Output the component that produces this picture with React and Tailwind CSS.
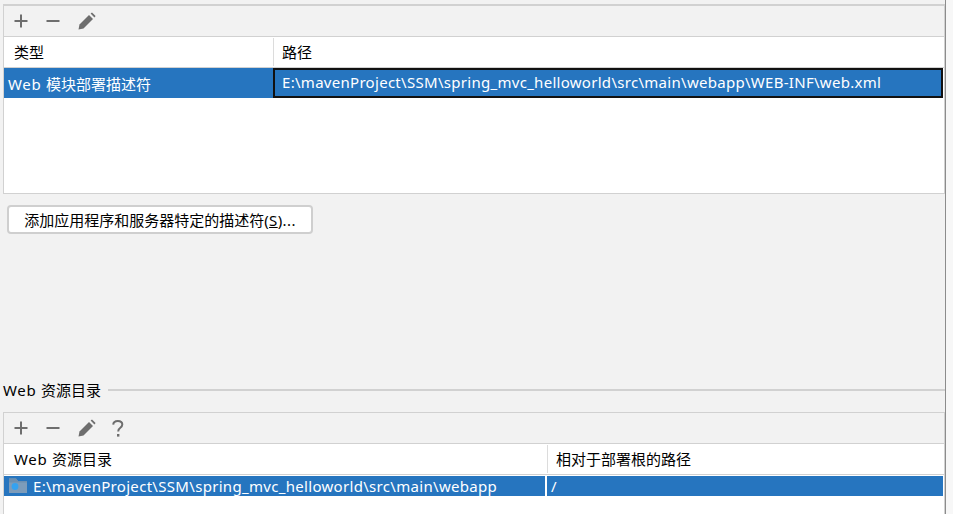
import React from "react";

const font = { fontFamily: '"Noto Sans", "Noto Sans CJK SC", sans-serif' };

function Plus() {
  return (
    <svg width="14" height="14" viewBox="0 0 14 14" className="block">
      <path d="M7 0.5v13M0.5 7h13" stroke="#6e6e6e" strokeWidth="2" fill="none" />
    </svg>
  );
}
function Minus() {
  return (
    <svg width="14" height="14" viewBox="0 0 14 14" className="block">
      <path d="M0.5 7h13" stroke="#6e6e6e" strokeWidth="2" fill="none" />
    </svg>
  );
}
function Pencil() {
  return (
    <svg width="18" height="18" viewBox="0 0 18 18" className="block">
      <path d="M0.5 17.5l1-5L11 3l4 4L5.5 16.5z" fill="#6e6e6e" />
      <path d="M12.6 1.6l1.4-1.2 3.6 3.6-1.2 1.4z" fill="#6e6e6e" />
    </svg>
  );
}
function Help() {
  return (
    <svg width="12" height="17" viewBox="0 0 12 17" className="block">
      <path d="M1.2 4.6C1.4 2.4 3 1 5.8 1c2.7 0 4.5 1.4 4.5 3.6 0 1.7-.9 2.5-2.2 3.4C6.9 8.8 6.2 9.4 6.2 11.5" stroke="#6e6e6e" strokeWidth="2" fill="none" />
      <rect x="5" y="14" width="2.4" height="2.6" fill="#6e6e6e" />
    </svg>
  );
}
function Folder() {
  return (
    <svg width="18" height="16" viewBox="0 0 18 16" className="block">
      <path d="M0 0.5h7l2 2.5h9v12H0z" fill="#7d9cba" />
      <path d="M0 0.5h7l2 2.5h9v1.5H0z" fill="#6d8fb0" />
      <circle cx="6" cy="8.5" r="3.4" fill="#35a2f0" />
    </svg>
  );
}

function Toolbar({ help }) {
  return (
    <div className="flex h-[30px] items-center bg-[#f2f2f2] pl-[10px]">
      <div className="flex w-[32px]"><Plus /></div>
      <div className="flex w-[32px]"><Minus /></div>
      <div className="flex w-[34px]"><Pencil /></div>
      {help && <Help />}
    </div>
  );
}

function Web() {
  return <span className="tracking-[0.7px]">Web </span>;
}

function Header({ first, second, w }) {
  return (
    <div className="flex h-[32px] border-y border-y-[#d1d1d1] bg-white text-[15px] leading-[30px] text-black">
      <div className="pl-[10px]" style={{ width: w }}>{first}</div>
      <div className="my-px w-px bg-[#dcdcdc]" />
      <div className="pl-[8px]">{second}</div>
    </div>
  );
}

export default function App() {
  return (
    <div className="flex h-[514px] w-[953px] overflow-hidden bg-[#f2f2f2]" style={font}>
      <div className="flex w-[945px] flex-col pt-[4px]">
        <div className="ml-[3px] flex h-[190px] flex-col border-x border-b border-x-[#d1d1d1] border-b-[#d1d1d1] bg-white">
          <div className="h-[2px] bg-[#d1d1d1]" />
          <Toolbar />
          <Header first="类型" second="路径" w="269px" />
          <div className="mr-px flex h-[30px] bg-[#2675bf] text-[15px] leading-[32px] text-white">
            <div className="w-[269px] pl-[4px]"><Web />模块部署描述符</div>
            <div className="flex-1 border-2 border-[#111] pl-[7px] leading-[24px] tracking-[0.29px]">
              E:\mavenProject\SSM\spring_mvc_helloworld\src\main\webapp\WEB-INF\web.xml
            </div>
          </div>
        </div>

        <button className="ml-[7px] mt-[11px] h-[29px] w-[306px] rounded-[4px] border-2 border-[#cfcfcf] bg-white pt-[2px] text-[15px] leading-[23px] text-black">
          添加应用程序和服务器特定的描述符<span className="tracking-[0.4px]">(<span className="underline">S</span>)...</span>
        </button>

        <div className="ml-[3px] mt-[144px] flex h-[24px] items-center text-[15px] text-black">
          <span className="leading-[24px]"><Web />资源目录</span>
          <div className="ml-[7px] h-[2px] flex-1 bg-[#d1d1d1]" />
        </div>

        <div className="ml-[3px] mt-[10px] flex flex-1 flex-col border-x border-t border-x-[#d1d1d1] border-t-[#d1d1d1] bg-white">
          <Toolbar help />
          <Header first={<><Web />资源目录</>} second="相对于部署根的路径" w="543px" />
          <div className="mr-px mt-px flex h-[20px] bg-[#2675bf] text-[15px] leading-[20px] text-white">
            <div className="flex w-[541px] items-center pl-[5px]">
              <Folder />
              <span className="ml-[6px] tracking-[0.31px]">E:\mavenProject\SSM\spring_mvc_helloworld\src\main\webapp</span>
            </div>
            <div className="w-[2px] bg-white" />
            <div className="pl-[4px]">/</div>
          </div>
        </div>
      </div>
      <div className="w-px bg-[#8c8c8c]" />
      <div className="flex-1 bg-[#f7f7f7]" />
    </div>
  );
}
